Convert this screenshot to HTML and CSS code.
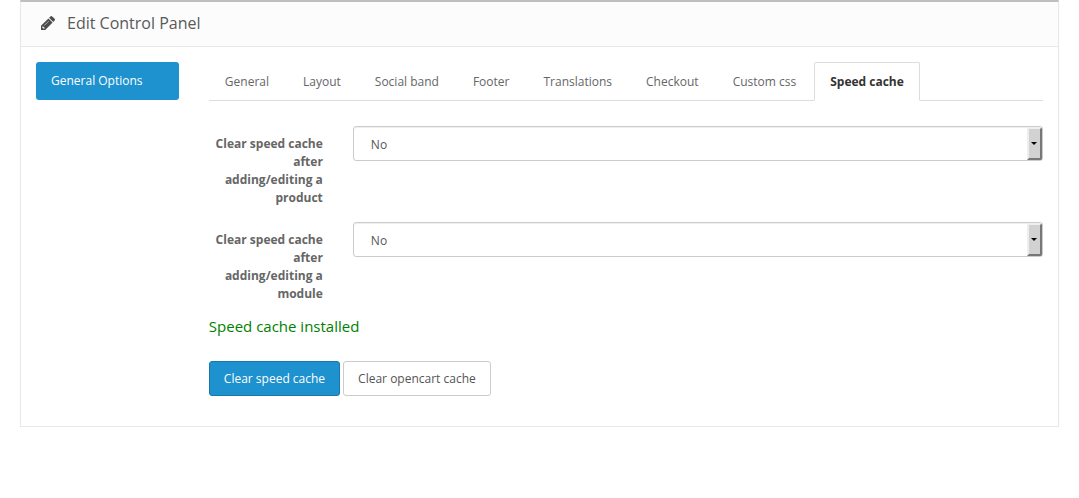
FILE: index.html
```html
<!DOCTYPE html>
<html lang="en">
<head>
<meta charset="utf-8">
<meta name="viewport" content="width=device-width, initial-scale=1">
<title>Edit Control Panel</title>
<link rel="stylesheet" href="styles.css">
</head>
<body>
<main class="panel">
  <header class="panel-heading">
    <svg class="pencil" viewBox="0 0 14 14" aria-hidden="true"><path fill="currentColor" fill-rule="evenodd" d="M0 14V9.8L7.4 2.4 11.6 6.6 4.2 14ZM1.2 10.9V11.7H2.3V12.8H3.1L3.8 12.1 1.9 10.2ZM3.2 9.3L3.5 9.6 7.9 5.2 7.6 4.9ZM8.1 1.7 9.4 .4Q10.3-.4 11.2 .4L13.6 2.8Q14.4 3.7 13.6 4.6L12.3 5.9Z"/></svg>
    <h1 class="panel-title">Edit Control Panel</h1>
  </header>
  <div class="panel-body">
    <nav class="side"><a class="side-link" href="#general-options">General Options</a></nav>
    <section class="content">
      <nav class="tabs">
        <a class="tab" href="#general">General</a>
        <a class="tab" href="#layout">Layout</a>
        <a class="tab" href="#social">Social band</a>
        <a class="tab" href="#footer">Footer</a>
        <a class="tab" href="#translations">Translations</a>
        <a class="tab" href="#checkout">Checkout</a>
        <a class="tab" href="#css">Custom css</a>
        <a class="tab active" href="#speed" aria-current="page">Speed cache</a>
      </nav>
      <form>
        <div class="form-group">
          <label class="label" for="product">Clear speed cache after adding/editing a product</label>
          <div class="select-box">
            <select class="select" id="product"><option>No</option><option>Yes</option></select>
            <span class="arrow"></span>
          </div>
        </div>
        <div class="form-group">
          <label class="label" for="module">Clear speed cache after adding/editing a module</label>
          <div class="select-box">
            <select class="select" id="module"><option>No</option><option>Yes</option></select>
            <span class="arrow"></span>
          </div>
        </div>
        <p class="status">Speed cache installed</p>
        <div class="actions">
          <button class="btn primary" type="button">Clear speed cache</button>
          <button class="btn" type="button">Clear opencart cache</button>
        </div>
      </form>
    </section>
  </div>
</main>
</body>
</html>
```
FILE: styles.css
```css
* { box-sizing: border-box; }
body {
  margin: 0;
  padding: 0 20px;
  background: #fff;
  color: #666;
  font: 12px/18px "Open Sans", sans-serif;
}
a { text-decoration: none; }
.panel {
  border: 1px solid #e8e8e8;
  border-top: 2px solid #bfbfbf;
  box-shadow: 0 1px 1px rgba(0, 0, 0, .05);
}
.panel-heading {
  display: flex;
  align-items: center;
  gap: 12px;
  height: 45px;
  padding: 0 20px 2px;
  background: #fcfcfc;
  border-bottom: 1px solid #e8e8e8;
  color: #4c4c4c;
}
.pencil { width: 14px; height: 14px; }
.panel-title {
  margin: 0;
  color: #595959;
  font-size: 16px;
  font-weight: 400;
  line-height: 18px;
}
.panel-body {
  display: grid;
  grid-template-columns: minmax(0, 1fr) minmax(0, 5fr);
  padding: 15px 0 30px;
}
.side { padding: 0 15px; }
.side-link {
  display: block;
  padding: 10px 15px;
  border-radius: 3px;
  background: #1e91cf;
  color: #fff;
}
.content { padding: 0 15px; }
.tabs {
  display: flex;
  margin-bottom: 25px;
  border-bottom: 1px solid #ddd;
}
.tab {
  margin: 0 2px -1px 0;
  padding: 10px 15px 9px;
  border: 1px solid transparent;
  border-radius: 2px 2px 0 0;
  color: #666;
}
.tab.active {
  background: #fff;
  border-color: #ddd #ddd #fff;
  color: #333;
  font-weight: 700;
}
.form-group {
  display: grid;
  grid-template-columns: minmax(0, 1fr) minmax(0, 5fr);
  margin: 0 -15px 15px;
}
.label {
  padding: 9px 15px 0;
  font-weight: 700;
  text-align: right;
}
.select-box { position: relative; align-self: start; margin: 0 15px; }
.select {
  display: block;
  width: 100%;
  height: 35px;
  padding: 3px 17px 0;
  appearance: none;
  border: 1px solid #ccc;
  border-radius: 3px;
  background: #fff;
  box-shadow: inset 0 1px 1px rgba(0, 0, 0, .075);
  color: #555;
  font: inherit;
}
.arrow {
  position: absolute;
  top: 1px;
  right: 1px;
  bottom: 1px;
  display: flex;
  align-items: center;
  justify-content: center;
  width: 15px;
  border: 2px solid;
  border-color: #eee #777 #777 #eee;
  border-radius: 0 2px 2px 0;
  background: #d2d2d2;
  pointer-events: none;
}
.arrow::before {
  content: "";
  border: 3px solid transparent;
  border-top-color: #000;
  border-bottom: 0;
}
.status {
  margin: 0 0 27px;
  color: #008000;
  font-size: 15px;
  line-height: 16px;
}
.actions { display: flex; gap: 3px; }
.btn {
  padding: 8px 14px;
  border: 1px solid #ccc;
  border-radius: 3px;
  background: #fff;
  color: #555;
  font: inherit;
  line-height: 17px;
}
.btn.primary {
  border-color: #1978ab;
  background: #1e91cf;
  color: #fff;
}
```
